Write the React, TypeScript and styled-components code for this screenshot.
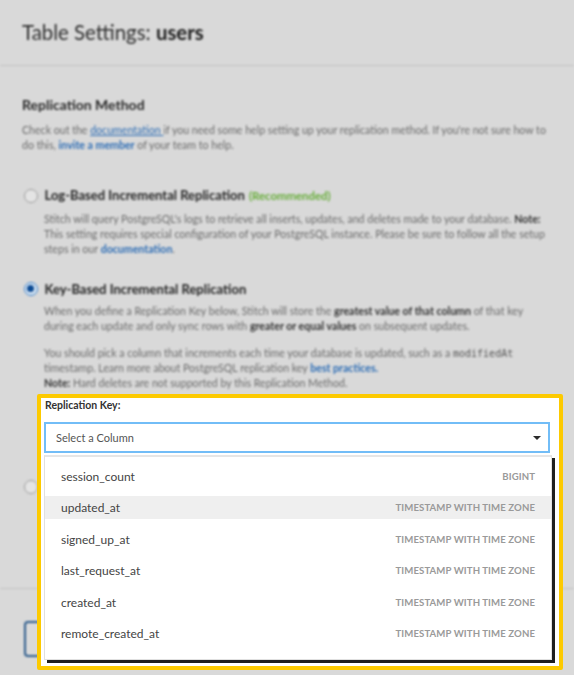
import React from "react";
import styled, { createGlobalStyle } from "styled-components";

const Global = createGlobalStyle`
  html, body { margin: 0; padding: 0; background: #d9d9d9; }
  body { font-family: Lato, "Open Sans", sans-serif; }
`;

const Page = styled.div`
  position: relative;
  width: 574px;
  height: 675px;
  overflow: hidden;
  background: #d9d9d9;
`;

const Backdrop = styled.div`
  filter: blur(0.8px);
`;

const Header = styled.header`
  height: 66px;
  box-sizing: border-box;
  border-bottom: 1px solid #c4c4c4;
  display: flex;
  align-items: center;
  padding: 0 22px 2px;
  font-size: 20.4px;
  color: #2e2e2e;
  b { font-weight: 700; color: #1e1e1e; }
`;

const Body = styled.div`
  height: 522px;
  box-sizing: border-box;
  padding: 29.5px 22px 0;
  overflow: hidden;
`;

const SectionTitle = styled.h2`
  margin: 0;
  font-size: 14px;
  line-height: 18px;
  font-weight: 700;
  color: #2a2a2a;
`;

const Text = styled.p<{ $top?: number; $indent?: boolean }>`
  margin: ${(p) => p.$top ?? 9.5}px 0 0;
  padding-left: ${(p) => (p.$indent ? 22 : 0)}px;
  font-size: 10.6px;
  line-height: 15px;
  color: #6b6b6b;
  white-space: nowrap;
  b { color: #333; font-weight: 700; }
`;

const Link = styled.a<{ $bold?: boolean; $underline?: boolean }>`
  color: #2d6db5;
  font-weight: ${(p) => (p.$bold ? 700 : 400)};
  text-decoration: ${(p) => (p.$underline ? "underline" : "none")};
`;

const Code = styled.code`
  font-family: "DejaVu Sans Mono", "Liberation Mono", monospace;
  font-size: 10px;
  color: #555;
`;

const OptionRow = styled.div<{ $top: number }>`
  margin-top: ${(p) => p.$top}px;
  display: flex;
  align-items: center;
  gap: 7px;
  min-height: 18px;
`;

const Radio = styled.span<{ $checked?: boolean }>`
  margin-left: 1.5px;
  width: 14px;
  height: 14px;
  box-sizing: border-box;
  border-radius: 50%;
  border: 1.5px solid ${(p) => (p.$checked ? "#3a7fc8" : "#9c9c9c")};
  background: ${(p) => (p.$checked ? "#d6e4f2" : "#e4e4e4")};
  display: flex;
  align-items: center;
  justify-content: center;
  &::after {
    content: "";
    display: ${(p) => (p.$checked ? "block" : "none")};
    width: 7px;
    height: 7px;
    border-radius: 50%;
    background: #0b4a94;
  }
`;

const OptionLabel = styled.span`
  font-size: 13px;
  line-height: 18px;
  font-weight: 700;
  color: #252525;
`;

const Recommended = styled.span`
  margin-left: 4px;
  font-size: 11.4px;
  font-weight: 700;
  color: #67ad3a;
`;

const FieldSpace = styled.div`
  height: 62px;
`;

const FieldLabel = styled.div`
  padding-left: 1px;
  font-size: 10.5px;
  line-height: 14px;
  font-weight: 700;
  color: #333;
`;

const SelectBox = styled.div`
  margin-top: 10px;
  width: 506px;
  height: 31px;
  box-sizing: border-box;
  border: 2px solid #72bdf7;
  background: #fff;
  display: flex;
  align-items: center;
  justify-content: space-between;
  padding: 0 7px 0 10px;
  font-size: 11px;
  color: #555;
`;

const Caret = styled.span`
  width: 0;
  height: 0;
  border-left: 4px solid transparent;
  border-right: 4px solid transparent;
  border-top: 4.5px solid #2b2b2b;
`;

const Footer = styled.footer`
  border-top: 1px solid #c4c4c4;
  padding: 32px 24px 0;
`;

const OutlineButton = styled.button`
  display: block;
  width: 110px;
  height: 36px;
  box-sizing: border-box;
  border: 2px solid #2f5d8c;
  border-radius: 4px;
  background: transparent;
`;

const Highlight = styled.div`
  position: absolute;
  left: 37px;
  top: 394px;
  width: 526px;
  height: 276px;
  box-sizing: border-box;
  border: 4px solid #fdca00;
  border-radius: 2px;
  background: #fff;
  padding: 0 0 0 3px;
`;

const Menu = styled.div`
  margin-top: 2px;
  width: 508px;
  height: 205px;
  box-sizing: border-box;
  border: 1px solid #e0e0e0;
  border-top: 2px solid #e6e6e6;
  box-shadow: 3px 3px 0 #1f1f1f;
  background: #fff;
  padding: 8px 16px 0;
  display: flex;
  flex-direction: column;
  gap: 8.4px;
`;

const MenuRow = styled.div<{ $active?: boolean }>`
  height: 23px;
  margin: 0 -16px;
  padding: 0 16px;
  display: flex;
  align-items: center;
  justify-content: space-between;
  background: ${(p) => (p.$active ? "#efefef" : "transparent")};
`;

const ColName = styled.span`
  font-size: 12px;
  color: #444;
`;

const ColType = styled.span`
  font-size: 9.6px;
  font-weight: 700;
  color: #9a9a9a;
  letter-spacing: 0.1px;
`;

const columns = [
  { name: "session_count", type: "BIGINT" },
  { name: "updated_at", type: "TIMESTAMP WITH TIME ZONE", active: true },
  { name: "signed_up_at", type: "TIMESTAMP WITH TIME ZONE" },
  { name: "last_request_at", type: "TIMESTAMP WITH TIME ZONE" },
  { name: "created_at", type: "TIMESTAMP WITH TIME ZONE" },
  { name: "remote_created_at", type: "TIMESTAMP WITH TIME ZONE" },
];

export default function App() {
  return (
    <Page>
      <Global />
      <Backdrop>
        <Header>
          Table Settings:&nbsp;<b>users</b>
        </Header>
        <Body>
          <SectionTitle>Replication Method</SectionTitle>
          <Text>
            Check out the <Link $underline>documentation </Link>if you need some help setting up your
            replication method. If you're not sure how to
            <br />
            do this, <Link $bold>invite a member</Link> of your team to help.
          </Text>

          <OptionRow $top={33}>
            <Radio />
            <OptionLabel>
              Log-Based Incremental Replication
              <Recommended>(Recommended)</Recommended>
            </OptionLabel>
          </OptionRow>
          <Text $top={6.5} $indent>
            Stitch will query PostgreSQL's logs to retrieve all inserts, updates, and deletes made to
            your database. <b>Note:</b>
            <br />
            This setting requires special configuration of your PostgreSQL instance. Please be sure to
            follow all the setup
            <br />
            steps in our <Link $bold>documentation</Link>.
          </Text>

          <OptionRow $top={23}>
            <Radio $checked />
            <OptionLabel>Key-Based Incremental Replication</OptionLabel>
          </OptionRow>
          <Text $top={6.5} $indent>
            When you define a Replication Key below, Stitch will store the{" "}
            <b>greatest value of that column</b> of that key
            <br />
            during each update and only sync rows with <b>greater or equal values</b> on subsequent
            updates.
          </Text>
          <Text $top={12} $indent>
            You should pick a column that increments each time your database is updated, such as a{" "}
            <Code>modifiedAt</Code>
            <br />
            timestamp. Learn more about PostgreSQL replication key <Link $bold>best practices.</Link>
            <br />
            <b>Note:</b> Hard deletes are not supported by this Replication Method.
          </Text>
          <FieldSpace />

          <OptionRow $top={25}>
            <Radio />
          </OptionRow>
        </Body>
        <Footer>
          <OutlineButton aria-label="Cancel" />
        </Footer>
      </Backdrop>

      <Highlight>
        <FieldLabel>Replication Key:</FieldLabel>
        <SelectBox>
          Select a Column
          <Caret />
        </SelectBox>
        <Menu>
          {columns.map((c) => (
            <MenuRow key={c.name} $active={c.active}>
              <ColName>{c.name}</ColName>
              <ColType>{c.type}</ColType>
            </MenuRow>
          ))}
        </Menu>
      </Highlight>
    </Page>
  );
}
